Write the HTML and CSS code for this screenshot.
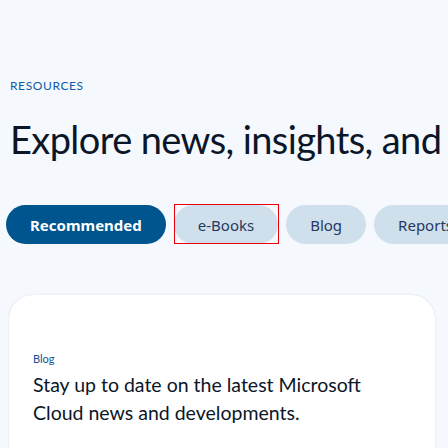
FILE: index.html
```
<!DOCTYPE html>
<html lang="en">
<head>
<meta charset="utf-8">
<title>Resources</title>
<link rel="stylesheet" href="styles.css">
</head>
<body>
<main class="page">
  <p class="eyebrow">RESOURCES</p>
  <h1 class="title">Explore news, insights, and</h1>
  <div class="tabs">
    <button class="pill pill-active">Recommended</button>
    <button class="pill pill-focus">e-Books</button>
    <button class="pill">Blog</button>
    <button class="pill">Reports</button>
  </div>
  <article class="card">
    <p class="card-tag">Blog</p>
    <h2 class="card-title">Stay up to date on the latest Microsoft Cloud news and developments.</h2>
  </article>
</main>
</body>
</html>
```
FILE: styles.css
```
html, body {
  margin: 0;
  padding: 0;
  background: #f5f9fd;
  overflow: hidden;
  width: 448px;
  height: 448px;
}
body {
  font-family: Lato, "Noto Sans", sans-serif;
  color: #0b1628;
}
.page {
  padding: 0 0 0 10px;
}
.eyebrow {
  margin: 0;
  padding-top: 78px;
  font-size: 12px;
  line-height: 16px;
  letter-spacing: 0.6px;
  color: #0e5aa7;
}
.title {
  margin: 18px 0 0 0;
  font-size: 38px;
  line-height: 54px;
  font-weight: 400;
  letter-spacing: -0.6px;
  white-space: nowrap;
  color: #0b1628;
}
.tabs {
  display: flex;
  gap: 8px;
  margin: 39px 0 0 -4px;
  white-space: nowrap;
}
.pill {
  position: relative;
  flex: none;
  height: 39px;
  border: none;
  border-radius: 20px;
  padding: 0 24px;
  background: #cfe0ec;
  color: #27385e;
  font-family: "Noto Sans", sans-serif;
  font-size: 15px;
}
.pill-active {
  background: #00558f;
  color: #ffffff;
  font-weight: 700;
}
.pill-focus::after {
  content: "";
  position: absolute;
  inset: -1px -1px 0 0;
  border: 1px solid #e8000b;
}
.card {
  margin: 51px 13px 0 -1px;
  background: #ffffff;
  border-radius: 24px;
  box-shadow: 0 0 2px rgba(40, 70, 110, 0.18);
  padding: 56px 24px 40px 24px;
  height: 200px;
}
.card-tag {
  margin: 0;
  font-size: 11px;
  line-height: 16px;
  color: #0f4f94;
}
.card-title {
  margin: 4px 0 0 0;
  font-size: 19.5px;
  line-height: 28px;
  font-weight: 400;
  color: #0b1628;
  max-width: 340px;
}
```
